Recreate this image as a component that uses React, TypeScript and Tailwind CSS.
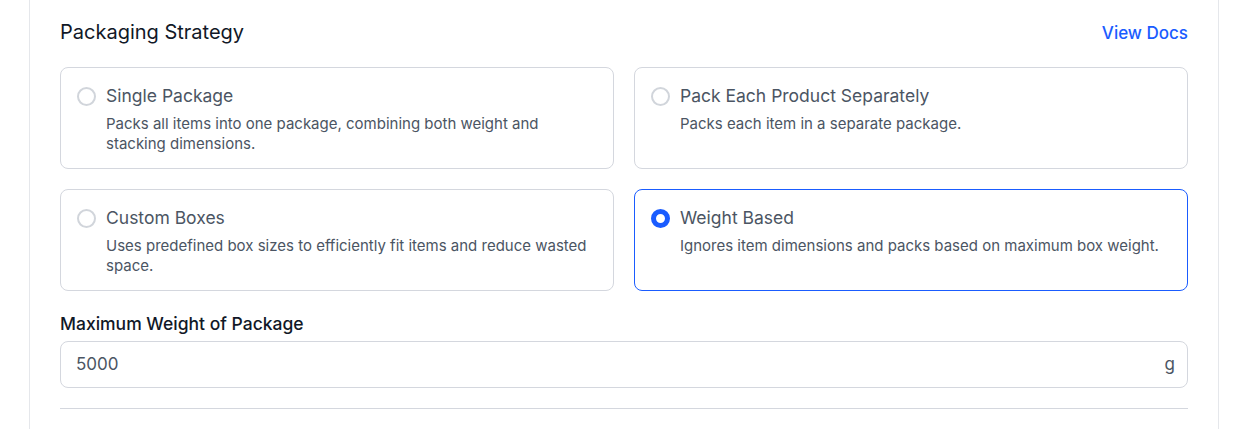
import React, { useState } from "react";

const options = [
  {
    id: "single",
    title: "Single Package",
    desc: "Packs all items into one package, combining both weight and stacking dimensions.",
  },
  {
    id: "separate",
    title: "Pack Each Product Separately",
    desc: "Packs each item in a separate package.",
  },
  {
    id: "custom",
    title: "Custom Boxes",
    desc: "Uses predefined box sizes to efficiently fit items and reduce wasted space.",
  },
  {
    id: "weight",
    title: "Weight Based",
    desc: "Ignores item dimensions and packs based on maximum box weight.",
  },
];

export default function App() {
  const [selected, setSelected] = useState("weight");
  return (
    <div
      className="w-[1247px] h-[429px] bg-white overflow-hidden pl-[29px]"
      style={{ fontFamily: "Inter, 'Noto Sans', sans-serif" }}
    >
      <div className="w-[1190px] h-full border-x border-[#e5e7eb] px-[30px] pt-[18px]">
        <div className="flex items-center justify-between h-7">
          <h2 className="text-[20px] leading-7 text-[#111827] font-normal">Packaging Strategy</h2>
          <a className="pt-[3px] text-[17px] text-[#1a5cff] font-medium cursor-pointer">View Docs</a>
        </div>
        <div className="mt-[21px] grid grid-cols-2 gap-5">
          {options.map((o) => {
            const active = o.id === selected;
            return (
              <div
                key={o.id}
                role="radio"
                aria-checked={active}
                onClick={() => setSelected(o.id)}
                className={`flex flex-col cursor-pointer rounded-lg border h-[102px] px-4 pt-[15px] ${
                  active ? "border-[#1a5cff]" : "border-[#d4d7de]"
                }`}
              >
                <div className="flex items-center gap-[10px]">
                  <span
                    className={`w-[19px] h-[19px] rounded-full shrink-0 bg-white ${
                      active ? "border-[5px] border-[#1a5cff]" : "border-2 border-[#d1d5db]"
                    }`}
                  />
                  <span className="text-[17.5px] leading-[26px] text-[#4b5563]">{o.title}</span>
                </div>
                <p className="ml-[29px] mt-[5px] text-[15px] leading-5 text-[#4b5563]">{o.desc}</p>
              </div>
            );
          })}
        </div>
        <label className="block mt-[21px] text-[17.5px] leading-6 font-medium text-[#111827]">
          Maximum Weight of Package
        </label>
        <div className="mt-[5px] h-[47px] rounded-lg border border-[#d4d7de] flex items-center pl-[15px] pr-3">
          <input
            defaultValue="5000"
            className="flex-1 outline-none text-[17px] text-[#4b5563] bg-transparent"
          />
          <span className="text-[17px] text-[#4b5563]">g</span>
        </div>
        <div className="mt-[20px] h-px bg-[#d4d7de]" />
      </div>
    </div>
  );
}
